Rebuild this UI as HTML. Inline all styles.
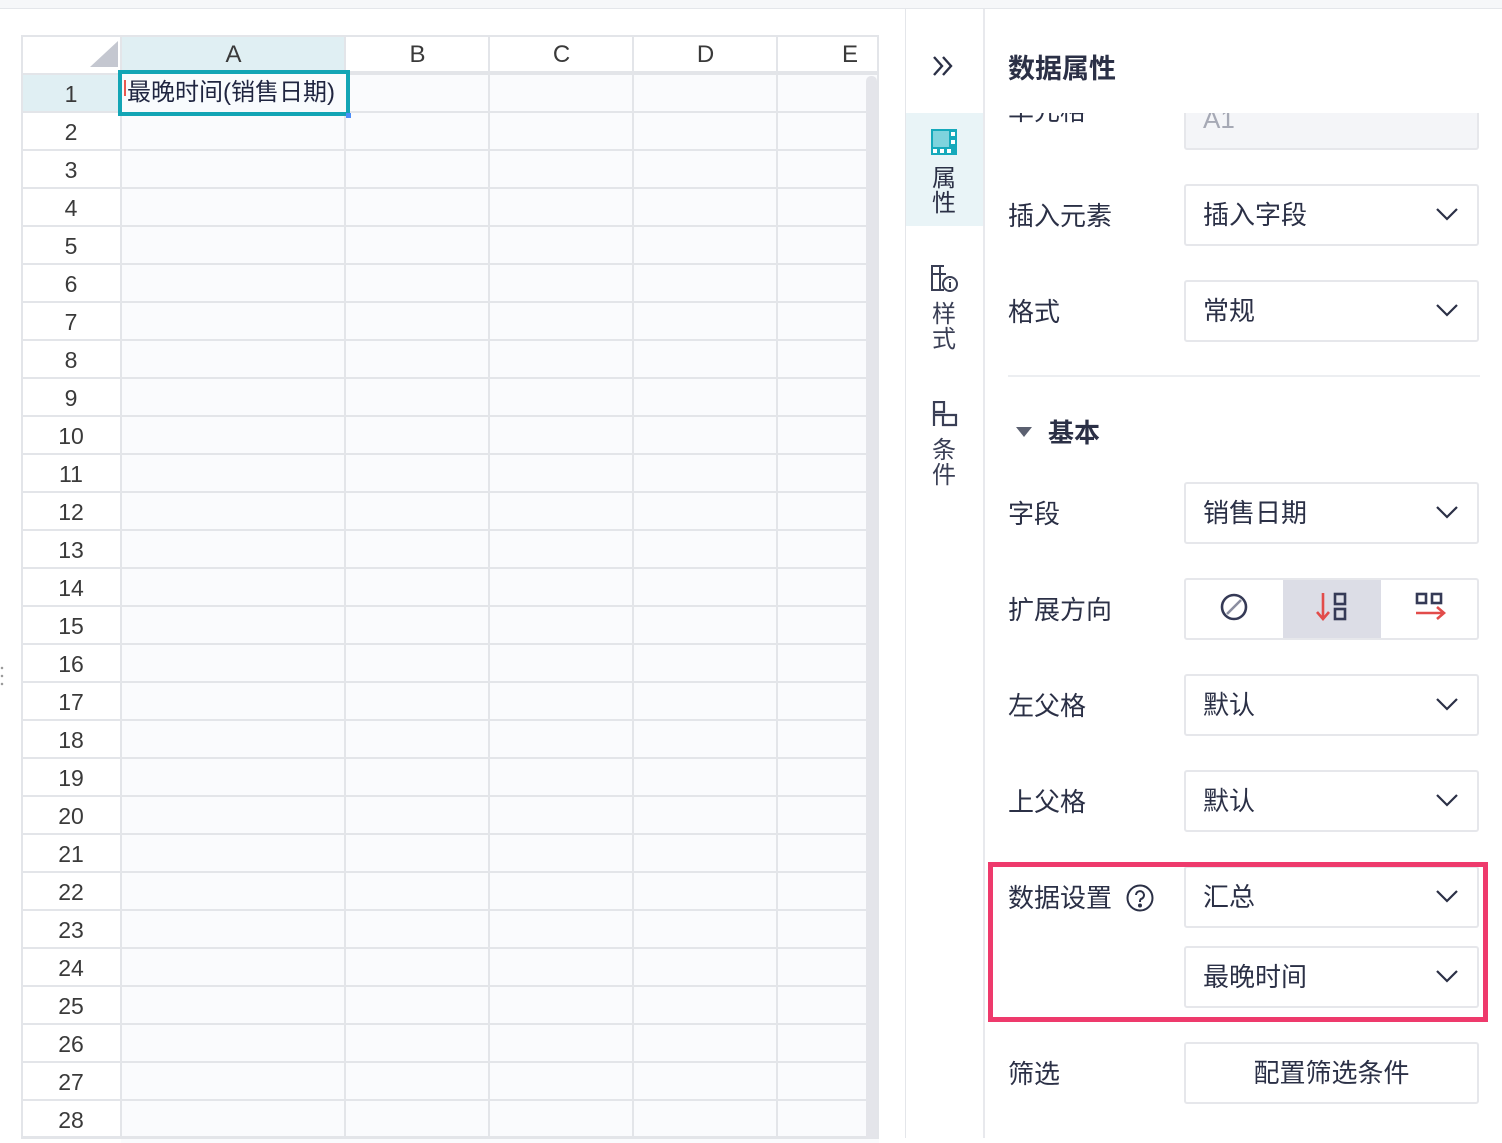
<!DOCTYPE html>
<html><head><meta charset="utf-8"><style>
*{margin:0;padding:0;box-sizing:border-box}
body{width:1502px;height:1138px;overflow:hidden;background:#fff;font-family:"Liberation Sans","Noto Sans CJK SC",sans-serif;color:#2b3046;position:relative}
.a{position:absolute}
.top{left:0;top:0;width:1502px;height:9px;background:#f6f7f9;border-bottom:1px solid #e4e6ea}
.body{left:21px;top:73px;width:858px;height:1070px;background:#fafbfd;
background-image:repeating-linear-gradient(to bottom,#e3e5e9 0,#e3e5e9 2px,transparent 2px,transparent 38px)}
.rh{left:21px;top:73px;width:100px;height:1070px;background:#fff;
background-image:repeating-linear-gradient(to bottom,#e3e5e9 0,#e3e5e9 2px,transparent 2px,transparent 38px)}
.vl{width:2px;background:#e3e5e9;top:35px;height:1103px}
.ch{top:35px;height:38px;font-size:24px;color:#3a3a3a;text-align:center;line-height:40px;border-bottom:2px solid #e3e5e9}
.rn{left:21px;width:100px;text-align:center;font-size:23px;color:#3a3a3a;line-height:38px;height:38px}
.lbl{left:1008px;font-size:26px;color:#2b3046}
.box{left:1184px;width:295px;height:62px;border:2px solid #e6e7eb;border-radius:3px;background:#fff;font-size:26px;line-height:58px;padding-left:17px}
.chev{position:absolute;right:18px;top:20px}
.side{font-size:24px;color:#3a3f55;text-align:center;line-height:25px;width:78px;left:905px}
</style></head><body>
<div class="a top"></div>
<div class="a body"></div>
<div class="a rh"></div>
<div class="a" style="left:21px;top:35px;width:858px;height:38px;background:#fff;border-top:2px solid #e3e5e9"></div>
<div class="a" style="left:121px;top:35px;width:224px;height:38px;background:#e0eff3;border-top:2px solid #e3e5e9"></div>
<div class="a" style="left:21px;top:73px;width:100px;height:38px;background:#e0eff3"></div>
<svg class="a" style="left:90px;top:41px" width="28" height="26"><polygon points="28,0 28,26 0,26" fill="#c4c7d0"/></svg>
<div class="a vl" style="left:21px"></div>
<div class="a vl" style="left:120px"></div>
<div class="a vl" style="left:344px"></div>
<div class="a vl" style="left:488px"></div>
<div class="a vl" style="left:632px"></div>
<div class="a vl" style="left:776px"></div>
<div class="a vl" style="left:877px"></div>
<div class="a" style="left:21px;top:1136px;width:858px;height:2px;background:#e3e5e9"></div>
<div class="a" style="left:866px;top:76px;width:11px;height:1062px;background:#e4e5ea;border-radius:5px 5px 0 0"></div>
<div class="a ch" style="left:122px;width:223px">A</div>
<div class="a ch" style="left:346px;width:143px">B</div>
<div class="a ch" style="left:490px;width:143px">C</div>
<div class="a ch" style="left:634px;width:143px">D</div>
<div class="a ch" style="left:778px;width:100px;text-align:right;padding-right:20px">E</div>
<div class="a" style="left:21px;top:73px;width:858px;height:2px;background:#e3e5e9"></div>
<div class="a rn" style="top:75px">1</div><div class="a rn" style="top:113px">2</div><div class="a rn" style="top:151px">3</div><div class="a rn" style="top:189px">4</div><div class="a rn" style="top:227px">5</div><div class="a rn" style="top:265px">6</div><div class="a rn" style="top:303px">7</div><div class="a rn" style="top:341px">8</div><div class="a rn" style="top:379px">9</div><div class="a rn" style="top:417px">10</div><div class="a rn" style="top:455px">11</div><div class="a rn" style="top:493px">12</div><div class="a rn" style="top:531px">13</div><div class="a rn" style="top:569px">14</div><div class="a rn" style="top:607px">15</div><div class="a rn" style="top:645px">16</div><div class="a rn" style="top:683px">17</div><div class="a rn" style="top:721px">18</div><div class="a rn" style="top:759px">19</div><div class="a rn" style="top:797px">20</div><div class="a rn" style="top:835px">21</div><div class="a rn" style="top:873px">22</div><div class="a rn" style="top:911px">23</div><div class="a rn" style="top:949px">24</div><div class="a rn" style="top:987px">25</div><div class="a rn" style="top:1025px">26</div><div class="a rn" style="top:1063px">27</div><div class="a rn" style="top:1101px">28</div>
<div class="a" style="left:118px;top:70px;width:232px;height:46px;border:4px solid #12a5b5;background:#f8fbfd;font-size:24px;line-height:38px;padding-left:5px;color:#1f2540;white-space:nowrap">最晚时间(销售日期)</div>
<div class="a" style="left:124px;top:80px;width:2px;height:16px;background:#e8594f"></div>
<div class="a" style="left:346px;top:113px;width:5px;height:5px;background:#4b8df8"></div>
<div class="a" style="left:0;top:664px;width:4px;height:26px;background:radial-gradient(circle,#999 1px,transparent 1.5px) 0 0/4px 8px"></div>

<div class="a" style="left:905px;top:9px;width:1px;height:1129px;background:#e4e6ea"></div>
<div class="a" style="left:983px;top:9px;width:2px;height:1129px;background:#e8e9ed"></div>
<div class="a" style="left:906px;top:113px;width:77px;height:113px;background:#e9f4f7"></div>
<svg class="a" style="left:930px;top:54px" width="26" height="24" fill="none" stroke="#2b3046" stroke-width="2.4"><path d="M4 3l8 9-8 9M13 3l8 9-8 9"/></svg>
<svg class="a" style="left:931px;top:129px" width="26" height="26"><rect x="0" y="0" width="26" height="26" fill="#16a9bb"/><rect x="2" y="2" width="16" height="16" fill="#7fd3dd"/><g fill="#fff"><rect x="20" y="3" width="4" height="4"/><rect x="20" y="11" width="4" height="4"/><rect x="2" y="20" width="4" height="4"/><rect x="9" y="20" width="4" height="4"/><rect x="16" y="20" width="4" height="4"/></g></svg>
<div class="a side" style="top:166px;color:#2b3046">属<br>性</div>
<svg class="a" style="left:931px;top:265px" width="28" height="28" fill="none" stroke="#3a3f55" stroke-width="2"><path d="M13 1H1v24h12M1 9h14M9 1v24"/><circle cx="19" cy="19" r="7"/><path d="M19 17v6M19 14v1"/></svg>
<div class="a side" style="top:302px">样<br>式</div>
<svg class="a" style="left:931px;top:401px" width="28" height="26" fill="none" stroke="#3a3f55" stroke-width="2.2"><path d="M3 1h10v10H3zM3 1v24M3 14h22v10H12V14"/></svg>
<div class="a side" style="top:438px">条<br>件</div>

<div class="a lbl" style="top:47px;font-weight:bold;font-size:27px">数据属性</div>
<div class="a" style="left:985px;top:113px;width:517px;height:1025px;overflow:hidden">
 <div class="a lbl" style="left:23px;top:-22px">单元格</div>
 <div class="a box" style="left:199px;top:-25px;background:#f4f5f8;color:#a6a9b5">A1</div>
</div>
<div class="a lbl" style="top:196px">插入元素</div>
<div class="a box" style="top:184px">插入字段<svg class="chev" width="24" height="16" fill="none" stroke="#2b3046" stroke-width="2.2"><path d="M2 3l10 10 10-10"/></svg></div>
<div class="a lbl" style="top:292px">格式</div>
<div class="a box" style="top:280px">常规<svg class="chev" width="24" height="16" fill="none" stroke="#2b3046" stroke-width="2.2"><path d="M2 3l10 10 10-10"/></svg></div>
<div class="a" style="left:1008px;top:375px;width:472px;height:2px;background:#eceef1"></div>
<svg class="a" style="left:1016px;top:427px" width="16" height="12"><polygon points="0,0 16,0 8,10" fill="#5b6070"/></svg>
<div class="a lbl" style="left:1048px;top:413px;font-weight:bold">基本</div>
<div class="a lbl" style="top:494px">字段</div>
<div class="a box" style="top:482px">销售日期<svg class="chev" width="24" height="16" fill="none" stroke="#2b3046" stroke-width="2.2"><path d="M2 3l10 10 10-10"/></svg></div>
<div class="a lbl" style="top:590px">扩展方向</div>
<div class="a box" style="top:578px;padding:0"></div>
<div class="a" style="left:1283px;top:580px;width:98px;height:58px;background:#dcdde6"></div>
<svg class="a" style="left:1219px;top:592px" width="30" height="30" fill="none" stroke-width="2.6"><circle cx="15" cy="15" r="12" stroke="#353a56"/><path d="M8 22L22 8" stroke="#8a8ea0"/></svg>
<svg class="a" style="left:1316px;top:591px" width="34" height="32" fill="none" stroke-width="2.6"><path d="M7 2v26M1 21l6 7 6-7" stroke="#e24c4a"/><rect x="19" y="3" width="10" height="10" stroke="#353a56"/><rect x="19" y="18" width="10" height="10" stroke="#353a56"/></svg>
<svg class="a" style="left:1414px;top:591px" width="34" height="32" fill="none" stroke-width="2.6"><rect x="3" y="3" width="9" height="9" stroke="#353a56"/><rect x="18" y="3" width="9" height="9" stroke="#353a56"/><path d="M2 22h28M23 16l7 6-7 6" stroke="#e24c4a"/></svg>
<div class="a lbl" style="top:686px">左父格</div>
<div class="a box" style="top:674px">默认<svg class="chev" width="24" height="16" fill="none" stroke="#2b3046" stroke-width="2.2"><path d="M2 3l10 10 10-10"/></svg></div>
<div class="a lbl" style="top:782px">上父格</div>
<div class="a box" style="top:770px">默认<svg class="chev" width="24" height="16" fill="none" stroke="#2b3046" stroke-width="2.2"><path d="M2 3l10 10 10-10"/></svg></div>
<div class="a lbl" style="top:878px">数据设置</div>
<svg class="a" style="left:1125px;top:883px" width="30" height="30" fill="none" stroke="#2b3046" stroke-width="2"><circle cx="15" cy="15" r="12.5"/><path d="M11 12a4 4 0 1 1 5 4c-1 .5-1 1.5-1 3" /><circle cx="15" cy="22.5" r="1" fill="#2b3046"/></svg>
<div class="a box" style="top:866px">汇总<svg class="chev" width="24" height="16" fill="none" stroke="#2b3046" stroke-width="2.2"><path d="M2 3l10 10 10-10"/></svg></div>
<div class="a box" style="top:946px">最晚时间<svg class="chev" width="24" height="16" fill="none" stroke="#2b3046" stroke-width="2.2"><path d="M2 3l10 10 10-10"/></svg></div>
<div class="a" style="left:988px;top:862px;width:500px;height:160px;border:5px solid #ee3a6c"></div>
<div class="a lbl" style="top:1054px">筛选</div>
<div class="a box" style="top:1042px;text-align:center;padding:0">配置筛选条件</div>
</body></html>
